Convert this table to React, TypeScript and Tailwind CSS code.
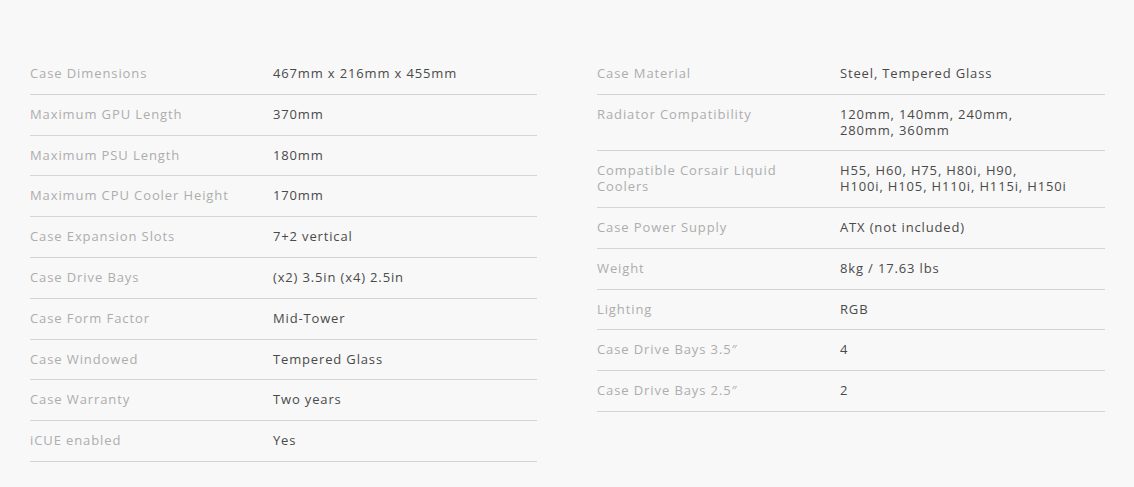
import React from "react";

const left: [string, string][] = [
  ["Case Dimensions", "467mm x 216mm x 455mm"],
  ["Maximum GPU Length", "370mm"],
  ["Maximum PSU Length", "180mm"],
  ["Maximum CPU Cooler Height", "170mm"],
  ["Case Expansion Slots", "7+2 vertical"],
  ["Case Drive Bays", "(x2) 3.5in (x4) 2.5in"],
  ["Case Form Factor", "Mid-Tower"],
  ["Case Windowed", "Tempered Glass"],
  ["Case Warranty", "Two years"],
  ["iCUE enabled", "Yes"],
];

const right: [string, React.ReactNode][] = [
  ["Case Material", "Steel, Tempered Glass"],
  ["Radiator Compatibility", <>120mm, 140mm, 240mm,<br />280mm, 360mm</>],
  ["Compatible Corsair Liquid Coolers", <>H55, H60, H75, H80i, H90,<br />H100i, H105, H110i, H115i, H150i</>],
  ["Case Power Supply", "ATX (not included)"],
  ["Weight", "8kg / 17.63 lbs"],
  ["Lighting", "RGB"],
  ["Case Drive Bays 3.5\u2033", "4"],
  ["Case Drive Bays 2.5\u2033", "2"],
];

function Table({ rows }: { rows: [string, React.ReactNode][] }) {
  return (
    <div className="flex flex-col">
      {rows.map(([k, v], i) => (
        <div key={i} className="flex border-b border-[#d4d4d4] py-3 text-[13px] leading-[15.8px] tracking-[0.9px]">
          <div className="w-[243px] shrink-0 pr-6 text-[#adadad]">{k}</div>
          <div className="flex-1 text-[#4a4a4a] tracking-[0.85px]">{v}</div>
        </div>
      ))}
    </div>
  );
}

export default function App() {
  return (
    <div
      className="min-h-[487px] w-[1134px] bg-[#f8f8f8] pt-[54px] pl-[30px] pr-[29px]"
      style={{ fontFamily: '"Open Sans", "Liberation Sans", sans-serif' }}
    >
      <div className="grid grid-cols-[507px_508px] gap-x-[60px]">
        <Table rows={left} />
        <Table rows={right} />
      </div>
    </div>
  );
}
